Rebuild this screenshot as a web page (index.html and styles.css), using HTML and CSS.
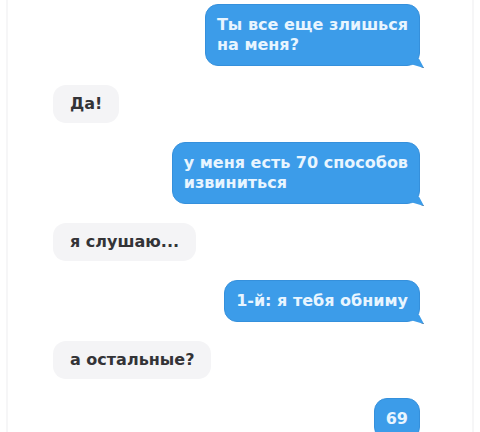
FILE: index.html
```html
<!DOCTYPE html>
<html lang="ru">
<head>
    <meta charset="UTF-8">
    <meta name="viewport" content="width=device-width, initial-scale=1.0">
    <title>Переписка</title>
    <link rel="stylesheet" href="styles.css">
</head>
<body>
    <div class="chat">
        <div class="msg out">Ты все еще злишься<br>на меня?</div>
        <div class="msg in">Да!</div>
        <div class="msg out">у меня есть 70 способов<br>извиниться</div>
        <div class="msg in">я слушаю...</div>
        <div class="msg out">1-й: я тебя обниму</div>
        <div class="msg in">а остальные?</div>
        <div class="msg out">69</div>
    </div>
</body>
</html>
```
FILE: styles.css
```css
body { margin: 0; background: #fff; font-family: "DejaVu Sans", "Open Sans", sans-serif; overflow: hidden; }
.chat { display: flex; flex-direction: column; gap: 19px; padding: 4px 52px 0 45px; margin: 0 6px; height: 432px; box-sizing: border-box; border-left: 2px solid #f6f6f7; border-right: 2px solid #f6f6f7; }
.msg { font-size: 16px; font-weight: 700; line-height: 20px; border-radius: 13px; padding: 10px 11px; position: relative; }
.out { align-self: flex-end; background: #3c9ce9; color: #e8f5ff; border: 1px solid #3590dc; }
.out::after { content: ""; position: absolute; right: -5px; bottom: -3px; width: 12px; height: 8px; background: #3c9ce9; clip-path: polygon(0 0, 60% 0, 100% 100%, 0 60%); border-bottom: 1px solid #4a6f96; }
.in { align-self: flex-start; background: #f4f4f6; color: #333337; padding: 9px 17px; }
```
